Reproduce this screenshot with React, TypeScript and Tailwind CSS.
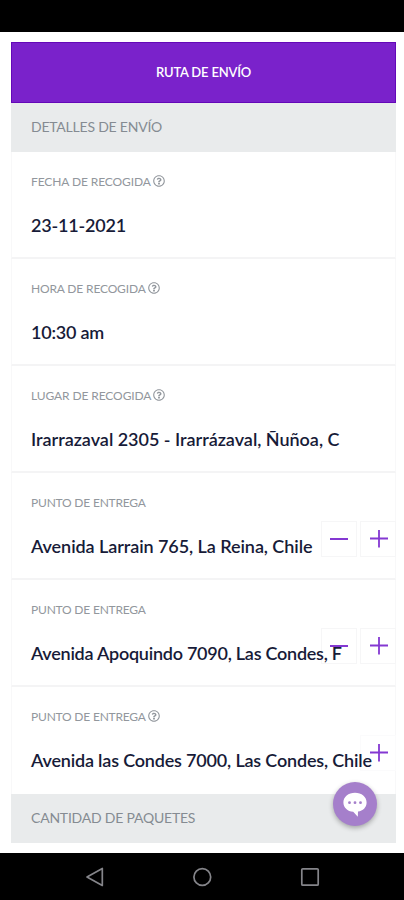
import { FaRegQuestionCircle } from "react-icons/fa";
import clsx from "clsx";

interface Field {
  label: string;
  value: string;
  labelClass: string;
  valueClass: string;
  help?: boolean;
  remove?: boolean;
  add?: boolean;
}

const fields: Field[] = [
  { label: "FECHA DE RECOGIDA", value: "23-11-2021", labelClass: "tracking-[-0.1px]", valueClass: "tracking-[-0.2px]", help: true },
  { label: "HORA DE RECOGIDA", value: "10:30 am", labelClass: "tracking-[-0.15px]", valueClass: "tracking-[-0.22px]", help: true },
  { label: "LUGAR DE RECOGIDA", value: "Irarrazaval 2305 - Irarrázaval, Ñuñoa, C", labelClass: "tracking-[-0.1px]", valueClass: "tracking-[-0.02px]", help: true },
  { label: "PUNTO DE ENTREGA", value: "Avenida Larrain 765, La Reina, Chile", labelClass: "tracking-[-0.2px]", valueClass: "tracking-[-0.07px]", remove: true, add: true },
  { label: "PUNTO DE ENTREGA", value: "Avenida Apoquindo 7090, Las Condes, F", labelClass: "tracking-[-0.2px]", valueClass: "tracking-[-0.25px]", remove: true, add: true },
  { label: "PUNTO DE ENTREGA", value: "Avenida las Condes 7000, Las Condes, Chile", labelClass: "tracking-[-0.2px]", valueClass: "tracking-[-0.18px]", help: true, add: true },
];

const SectionTitle = ({ children, className }: { children: string; className: string }) => (
  <h2 className={clsx("flex items-center bg-[#e9ebec] pb-[2px] pl-5 text-[14px] tracking-[-0.22px] text-[#858b92]", className)}>
    {children}
  </h2>
);

const FieldRow = ({ field, last }: { field: Field; last: boolean }) => (
  <div
    className={clsx(
      "relative h-[107px] border-x border-x-[#f8f8f9] pl-5 pt-[22px]",
      !last && "border-b-2 border-b-[#f4f4f5]"
    )}
  >
    <div className="-ml-px flex h-4 items-center gap-[2px] text-[12px] text-[#92979d]">
      <span className={field.labelClass}>{field.label}</span>
      {field.help && <FaRegQuestionCircle className="-mt-[2px] size-3" />}
    </div>
    <p className={clsx("relative z-10 -ml-px mt-[23px] h-6 whitespace-nowrap text-[18px] font-semibold leading-6 text-[#171b38]", field.valueClass)}>
      {field.value}
    </p>
    <div className="absolute -right-px top-12 flex gap-[3px]">
      {field.remove && (
        <button className="flex h-9 w-9 items-center justify-center border border-[#f6f6f7]">
          <svg className="shrink-0" width="18" height="18" viewBox="0 0 18 18" stroke="#8438d2" strokeWidth="2">
            <path d="M0 9h18" />
          </svg>
        </button>
      )}
      {field.add && (
        <button className={clsx("flex h-9 w-9 items-center justify-center border pl-[2px]", last ? "border-[#fbfbfc]" : "border-[#f6f6f7]")}>
          <svg className="shrink-0" width="18" height="18" viewBox="0 0 18 18" stroke="#8438d2" strokeWidth="1.8">
            <path d="M0 8.500h18M9 0v17.500" />
          </svg>
        </button>
      )}
    </div>
  </div>
);

const ChatButton = () => (
  <button className="absolute left-[333px] top-[782px] z-20 flex size-[44px] items-center justify-center rounded-full bg-[#a57fcb] pt-px shadow-[0_2px_5px_rgba(0,0,0,0.3)]">
    <svg width="24" height="25" viewBox="0 0 24 25">
      <path d="M12 0.8c6.6 0 11.6 4.200 11.6 9.600 0 4.900-3.700 8.400-8.600 9.200l-.2 5.200-4.600-5C4.400 19.200.4 15.400.4 10.400.4 5 5.400.8 12 .8z" fill="#fff" />
      <g fill="#a57fcb">
        <circle cx="6.500" cy="10.700" r="1.400" />
        <circle cx="12" cy="10.700" r="1.400" />
        <circle cx="17.500" cy="10.700" r="1.400" />
      </g>
    </svg>
  </button>
);

const NavBar = () => (
  <div className="flex h-[47px] items-center bg-black pl-[85px]">
    <svg width="235" height="20" viewBox="0 0 235 20" fill="none" stroke="#85858a" strokeWidth="1.7" strokeLinejoin="round">
      <path d="M2 10 17.300 1.500v17z" />
      <circle cx="117.300" cy="10" r="8.400" />
      <rect x="216.800" y="1.800" width="16.400" height="16.400" rx="1" />
    </svg>
  </div>
);

export default function App() {
  return (
    <div className="relative flex h-[900px] w-[404px] flex-col overflow-hidden bg-white font-['Lato',sans-serif]">
      <div className="h-8 bg-black" />
      <main className="ml-[11px] mt-[10px] w-[385px] flex-1">
        <h1 className="flex h-[61px] items-center justify-center border border-[#6408b8] bg-[#7a22cb] text-[13px] font-semibold tracking-[-0.2px] text-white">
          RUTA DE ENVÍO
        </h1>
        <SectionTitle className="h-[49px]">DETALLES DE ENVÍO</SectionTitle>
        {fields.map((field, i) => (
          <FieldRow key={i} field={field} last={i === fields.length - 1} />
        ))}
        <SectionTitle className="h-[49px]">CANTIDAD DE PAQUETES</SectionTitle>
      </main>
      <NavBar />
      <ChatButton />
    </div>
  );
}
